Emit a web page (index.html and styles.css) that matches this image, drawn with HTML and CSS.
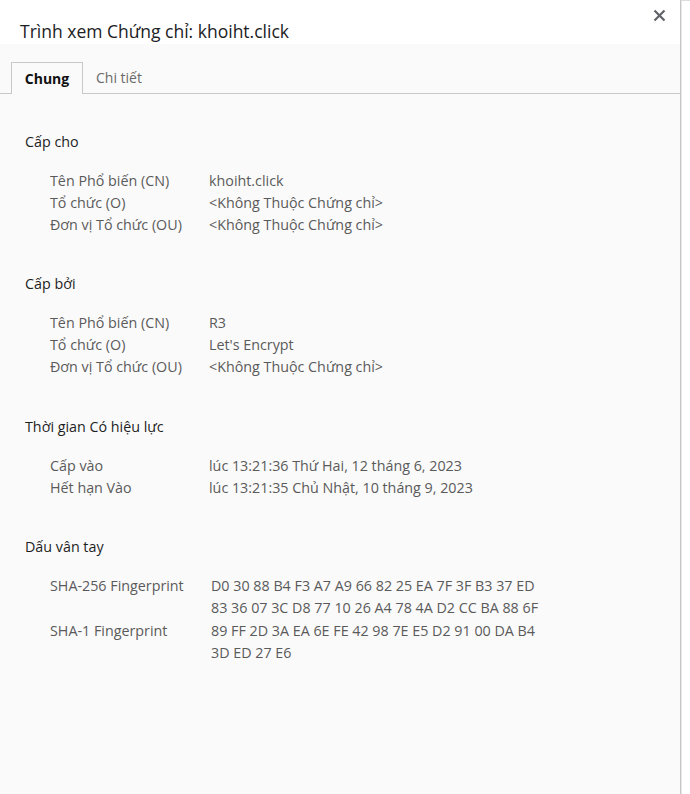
FILE: index.html
```html
<!DOCTYPE html>
<html lang="vi">
<head>
<meta charset="utf-8">
<title>Trình xem Chứng chỉ</title>
<link rel="stylesheet" href="styles.css">
</head>
<body>
<div class="page">
  <div class="dialog">
    <div class="header">
      <div class="title">Trình xem Chứng chỉ: khoiht.click</div>
      <button class="close" aria-label="Đóng">
        <svg width="13" height="13" viewBox="0 0 13 13"><path d="M1.5 1.5 L11.5 11.5 M11.5 1.5 L1.5 11.5" stroke="#5f6368" stroke-width="2.2" fill="none"/></svg>
      </button>
    </div>
    <div class="body">
      <div class="tabs">
        <div class="tab active">Chung</div>
        <div class="tab">Chi tiết</div>
      </div>
      <div class="content">
        <section class="section">
          <h2 class="heading">Cấp cho</h2>
          <div class="grid">
            <div class="label">Tên Phổ biến (CN)</div><div class="value">khoiht.click</div>
            <div class="label">Tổ chức (O)</div><div class="value">&lt;Không Thuộc Chứng chỉ&gt;</div>
            <div class="label">Đơn vị Tổ chức (OU)</div><div class="value">&lt;Không Thuộc Chứng chỉ&gt;</div>
          </div>
        </section>
        <section class="section">
          <h2 class="heading">Cấp bởi</h2>
          <div class="grid">
            <div class="label">Tên Phổ biến (CN)</div><div class="value">R3</div>
            <div class="label">Tổ chức (O)</div><div class="value">Let's Encrypt</div>
            <div class="label">Đơn vị Tổ chức (OU)</div><div class="value">&lt;Không Thuộc Chứng chỉ&gt;</div>
          </div>
        </section>
        <section class="section">
          <h2 class="heading">Thời gian Có hiệu lực</h2>
          <div class="grid">
            <div class="label">Cấp vào</div><div class="value">lúc 13:21:36 Thứ Hai, 12 tháng 6, 2023</div>
            <div class="label">Hết hạn Vào</div><div class="value">lúc 13:21:35 Chủ Nhật, 10 tháng 9, 2023</div>
          </div>
        </section>
        <section class="section">
          <h2 class="heading">Dấu vân tay</h2>
          <div class="grid fp">
            <div class="label">SHA-256 Fingerprint</div>
            <div class="value"><div>D0 30 88 B4 F3 A7 A9 66 82 25 EA 7F 3F B3 37 ED</div><div>83 36 07 3C D8 77 10 26 A4 78 4A D2 CC BA 88 6F</div></div>
            <div class="label">SHA-1 Fingerprint</div>
            <div class="value"><div>89 FF 2D 3A EA 6E FE 42 98 7E E5 D2 91 00 DA B4</div><div>3D ED 27 E6</div></div>
          </div>
        </section>
      </div>
    </div>
  </div>
  <div class="side"></div>
</div>
</body>
</html>
```

FILE: styles.css
```css
* { box-sizing: border-box; }
html, body { margin: 0; padding: 0; background: #ffffff; }
body {
  font-family: "Open Sans", "Noto Sans", "Liberation Sans", sans-serif;
  width: 690px;
  height: 794px;
  overflow: hidden;
}
.page {
  display: flex;
  height: 794px;
}
.dialog {
  width: 681px;
  height: 794px;
  border-right: 1px solid #c6c6c6;
  display: flex;
  flex-direction: column;
}
.side {
  flex: 1;
  border-top: 1px solid #dcdcdc;
  border-left: 1px solid #e8e8e8;
}
.header {
  height: 44px;
  background: #ffffff;
  display: flex;
  align-items: flex-start;
  justify-content: space-between;
  padding-left: 20px;
}
.title {
  font-size: 17.5px;
  line-height: 24px;
  color: #202124;
  margin-top: 19px;
}
.close {
  border: none;
  background: transparent;
  padding: 0;
  margin: 9px 14px 0 0;
  width: 13px;
  height: 13px;
  display: flex;
}
.body {
  flex: 1;
  background: #fafafa;
}
.tabs {
  display: flex;
  padding: 18px 0 0 11px;
  border-bottom: 1px solid #c8c8c8;
  height: 50px;
}
.tab {
  height: 32px;
  padding: 0 13px;
  font-size: 14px;
  line-height: 31px;
  color: #6a6a6a;
}
.tab.active {
  border: 1px solid #c8c8c8;
  border-bottom: none;
  background: #fafafa;
  margin-bottom: -1px;
  color: #111111;
  font-weight: 700;
  width: 72px;
  text-align: center;
  padding: 0;
}
.content {
  padding-left: 25px;
  padding-top: 37px;
}
.section + .section {
  margin-top: 37.4px;
}
.heading {
  margin: 0 0 17px 0;
  font-size: 14.3px;
  font-weight: 400;
  line-height: 22px;
  color: #1e1e1e;
}
.grid {
  display: grid;
  grid-template-columns: 159px auto;
  padding-left: 25px;
  font-size: 14.3px;
  line-height: 22px;
  color: #5a5a5a;
}
.grid.fp {
  grid-template-columns: 161px auto;
  line-height: 22.3px;
}
```
